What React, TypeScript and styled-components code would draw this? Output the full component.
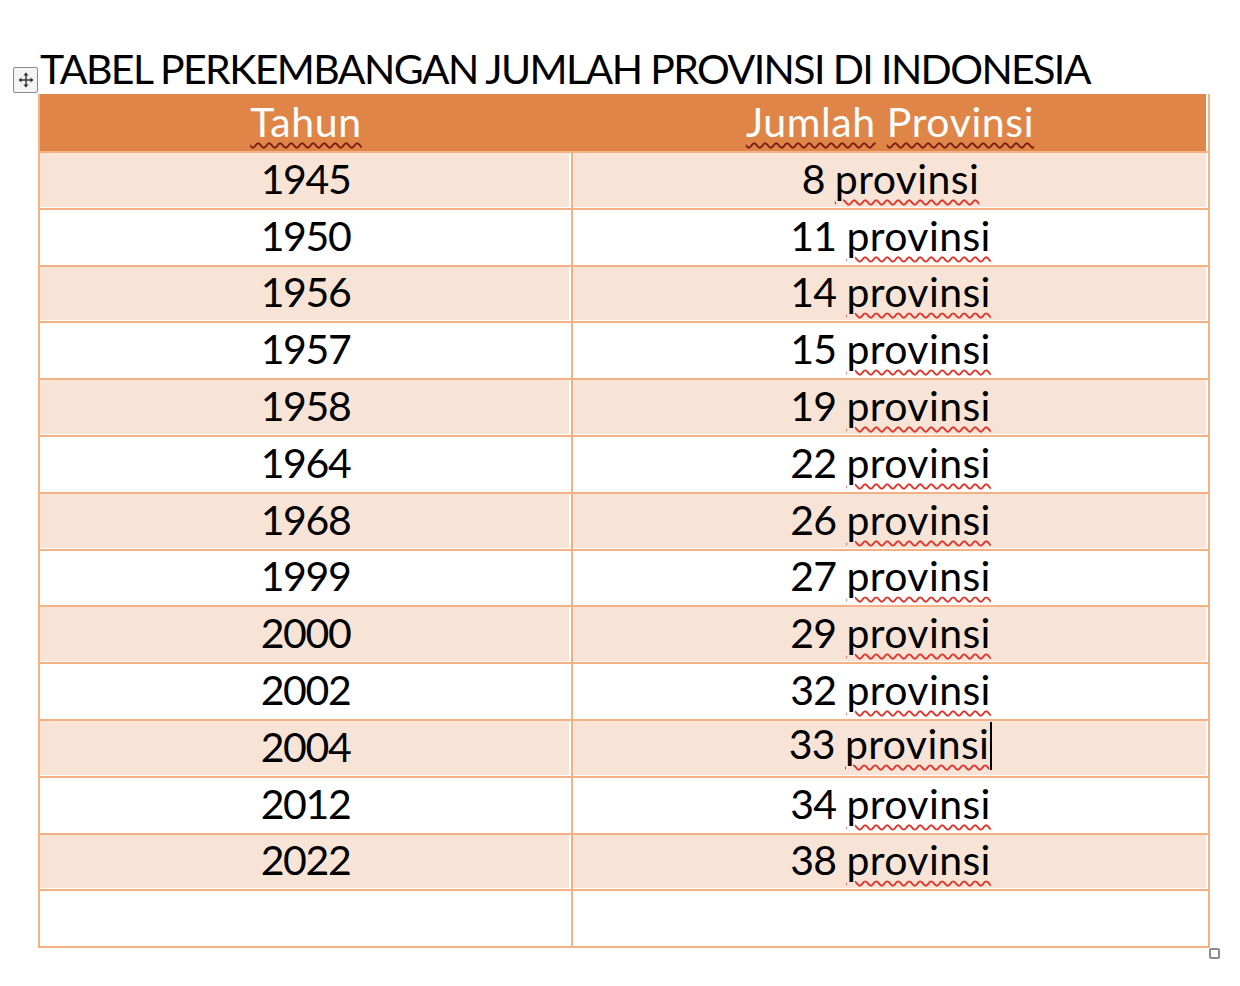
import React from "react";
import styled, { createGlobalStyle } from "styled-components";

const GlobalStyle = createGlobalStyle`
  html, body { margin: 0; padding: 0; background: #ffffff; }
  body { font-family: Lato, "Open Sans", "Liberation Sans", sans-serif; }
`;

const Page = styled.div`
  position: relative;
  width: 1240px;
  height: 986px;
  padding: 44px 0 0 38px;
  box-sizing: border-box;
`;

const Title = styled.div`
  font-family: Lato, "Liberation Sans", sans-serif;
  font-size: 41px;
  line-height: 50px;
  color: #000;
  padding-left: 2px;
  white-space: nowrap;
  letter-spacing: -1.6px;
`;

const MoveHandle = styled.div`
  position: absolute;
  left: 13px;
  top: 67px;
  width: 23px;
  height: 24px;
  border: 1px solid #8a8a8a;
  border-radius: 2px;
  background: #f4f4f4;
  display: flex;
  align-items: center;
  justify-content: center;
`;

const ResizeHandle = styled.div`
  position: absolute;
  left: 1209px;
  top: 948px;
  width: 7px;
  height: 7px;
  border: 2px solid #8c8c8c;
  border-radius: 2px;
  background: #fff;
`;

const Table = styled.table`
  width: 1172px;
  border-collapse: collapse;
  table-layout: fixed;
  border: 2px solid #f4b183;
  border-top: none;
`;

const HeadCell = styled.th<{ last?: boolean }>`
  background: #df8548;
  color: #ffffff;
  font-weight: 400;
  font-size: 41px;
  height: 58px;
  padding: 0 0 2px;
  text-align: center;
  vertical-align: middle;
  box-sizing: border-box;
  box-shadow: ${(p) => (p.last ? "inset -2px 0 0 #ffffff" : "none")};
  letter-spacing: 0.6px;
`;

const Row = styled.tr`
  height: 56.8px;
`;

const Cell = styled.td<{ shaded: boolean; first?: boolean }>`
  background: ${(p) => (p.shaded ? "#f8e4d7" : "#ffffff")};
  box-shadow: ${(p) => (p.shaded ? "inset 0 -1px 0 #ffffff, inset -2px 0 0 #ffffff" : "none")};
  border-top: 2px solid #f4b183;
  border-right: ${(p) => (p.first ? "2px solid #f4b183" : "none")};
  font-size: 41px;
  color: #000;
  padding: 0 0 4px;
  text-align: center;
  vertical-align: middle;
  line-height: 1;
  letter-spacing: ${(p) => (p.first ? "-1.35px" : "-0.6px")};
`;

const Squiggle = styled.span<{ dark?: boolean }>`
  text-decoration-line: underline;
  text-decoration-style: wavy;
  text-decoration-color: ${(p) => (p.dark ? "#7a1d12" : "#e0352b")};
  text-decoration-thickness: 1.5px;
  text-underline-offset: 5px;
`;

const Word = styled(Squiggle)`
  letter-spacing: 0.4px;
`;

const Caret = styled.span`
  display: inline-block;
  width: 2px;
  height: 48px;
  background: #000;
  vertical-align: -11px;
  margin-left: 1px;
`;

const rows: [string, string][] = [
  ["1945", "8"],
  ["1950", "11"],
  ["1956", "14"],
  ["1957", "15"],
  ["1958", "19"],
  ["1964", "22"],
  ["1968", "26"],
  ["1999", "27"],
  ["2000", "29"],
  ["2002", "32"],
  ["2004", "33"],
  ["2012", "34"],
  ["2022", "38"],
];

function MoveIcon() {
  return (
    <svg width="16" height="16" viewBox="0 0 16 16">
      <path d="M8 1.5v13M1.5 8h13" stroke="#333" strokeWidth="1.4" fill="none" />
      <path d="M8 0.5l-2.6 3h5.2zM8 15.5l-2.6-3h5.2zM0.5 8l3-2.6v5.2zM15.5 8l-3-2.6v5.2z" fill="#333" />
    </svg>
  );
}

export default function App() {
  return (
    <>
      <GlobalStyle />
      <Page>
        <MoveHandle>
          <MoveIcon />
        </MoveHandle>
        <Title>TABEL PERKEMBANGAN JUMLAH PROVINSI DI INDONESIA</Title>
        <Table>
          <colgroup>
            <col style={{ width: "533px" }} />
            <col />
          </colgroup>
          <thead>
            <tr>
              <HeadCell>
                <Squiggle dark>Tahun</Squiggle>
              </HeadCell>
              <HeadCell last>
                <Squiggle dark>Jumlah</Squiggle> <Squiggle dark>Provinsi</Squiggle>
              </HeadCell>
            </tr>
          </thead>
          <tbody>
            {rows.map(([year, n], i) => (
              <Row key={year}>
                <Cell shaded={i % 2 === 0} first>
                  {year}
                </Cell>
                <Cell shaded={i % 2 === 0}>
                  {n} <Word>provinsi</Word>
                  {year === "2004" && <Caret />}
                </Cell>
              </Row>
            ))}
            <Row>
              <Cell shaded={false} first></Cell>
              <Cell shaded={false}></Cell>
            </Row>
          </tbody>
        </Table>
        <ResizeHandle />
      </Page>
    </>
  );
}
